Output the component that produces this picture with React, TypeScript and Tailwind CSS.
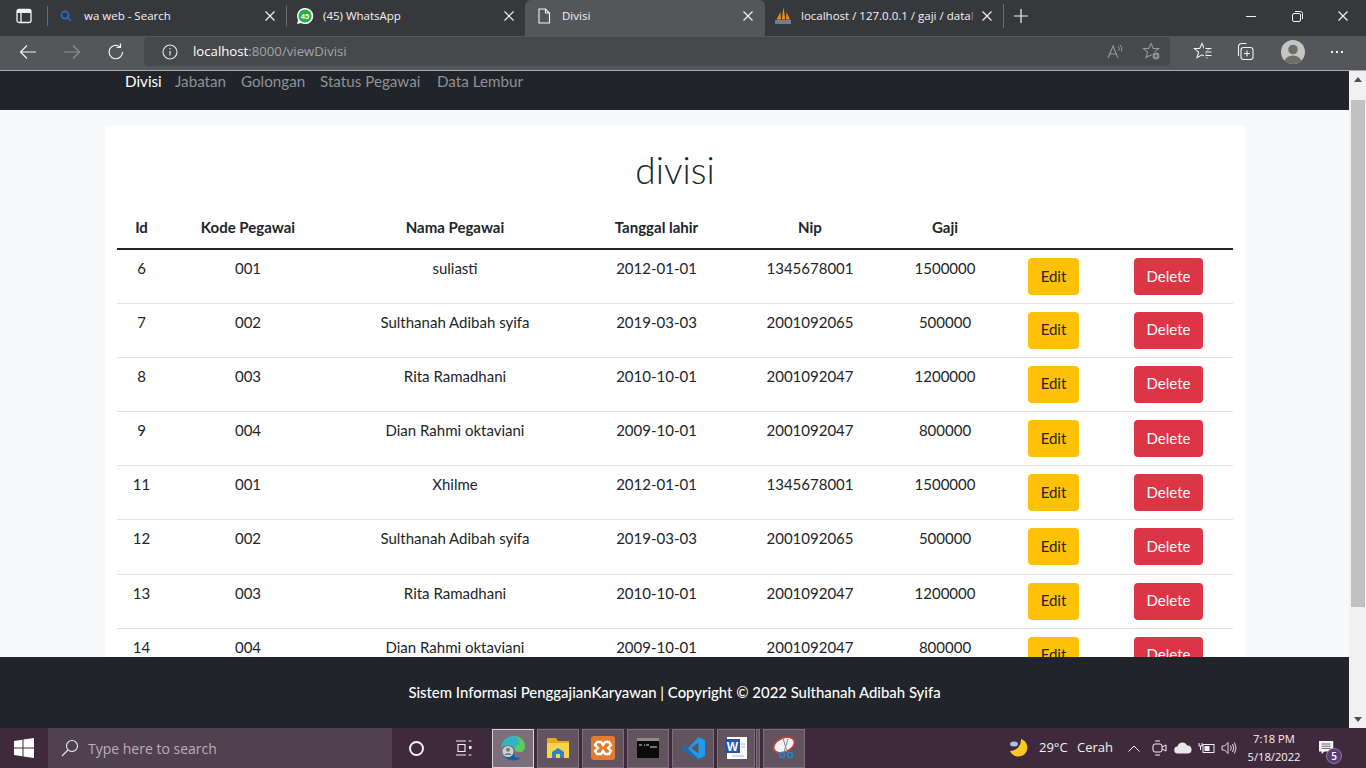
import React from "react";

const rows = [
  ["6", "001", "suliasti", "2012-01-01", "1345678001", "1500000"],
  ["7", "002", "Sulthanah Adibah syifa", "2019-03-03", "2001092065", "500000"],
  ["8", "003", "Rita Ramadhani", "2010-10-01", "2001092047", "1200000"],
  ["9", "004", "Dian Rahmi oktaviani", "2009-10-01", "2001092047", "800000"],
  ["11", "001", "Xhilme", "2012-01-01", "1345678001", "1500000"],
  ["12", "002", "Sulthanah Adibah syifa", "2019-03-03", "2001092065", "500000"],
  ["13", "003", "Rita Ramadhani", "2010-10-01", "2001092047", "1200000"],
  ["14", "004", "Dian Rahmi oktaviani", "2009-10-01", "2001092047", "800000"],
];

const X = () => (
  <svg width="12" height="12" viewBox="0 0 12 12" className="shrink-0"><path d="M1.500 1.500l9 9M10.500 1.500l-9 9" stroke="#f0f0f0" strokeWidth="1.200" /></svg>
);

const STAR = "M9 1.500l2.300 5h5.400l-4.300 3.700 1.600 5.500L9 12.800l-5 2.900 1.600-5.500L1.300 6.500h5.400z";

function Tab({ icon, title, active, w }: { icon: React.ReactNode; title: React.ReactNode; active?: boolean; w: string }) {
  return (
    <div className={`mb-[-4px] flex h-[36px] shrink-0 items-center pb-[4px] ${w} ${active ? "rounded-t-[6px] bg-[#55565a] pl-[6px] pr-[11px]" : "pl-[5px] pr-[10px]"}`}>
      <div className="flex w-[26px] shrink-0 justify-center">{icon}</div>
      <div className="ml-[5px] min-w-0 flex-1 overflow-hidden whitespace-nowrap text-[11.500px] text-[#f2f2f2]">{title}</div>
      <X />
    </div>
  );
}

function Tile({ children, active, w = "w-[42px]" }: { children?: React.ReactNode; active?: boolean; w?: string }) {
  return (
    <div className={`flex h-[39px] shrink-0 items-center justify-center border ${w} ${active ? "border-[#d8d4d8] bg-[#7c6f7a]" : "border-[#7d7079] bg-[#63535e]"}`}>
      {children}
    </div>
  );
}

export default function App() {
  return (
    <div className="flex h-[768px] w-[1366px] flex-col overflow-hidden bg-white" style={{ fontFamily: '"Open Sans","Liberation Sans",sans-serif' }}>
      {/* tab strip */}
      <div className="flex h-[36px] shrink-0 items-center bg-[#37383c] pb-[4px]">
        <div className="flex w-[47px] shrink-0 justify-center">
          <svg width="16" height="16" viewBox="0 0 16 16" fill="none"><rect x="1" y="1.500" width="14" height="13" rx="2" stroke="#f2f2f2" strokeWidth="1.300" /><path d="M5 5v9" stroke="#f2f2f2" strokeWidth="1.300" /><rect x="1" y="1.500" width="14" height="3.500" fill="#f2f2f2" /></svg>
        </div>
        <div className="h-[20px] w-px shrink-0 bg-[#6a6b6f]" />
        <Tab
          w="w-[238px]"
          title="wa web - Search"
          icon={<svg width="12" height="12" viewBox="0 0 12 12" fill="none"><circle cx="5" cy="5" r="3.600" stroke="#1a78d0" strokeWidth="1.600" /><path d="M7.600 7.600l3.400 3.400" stroke="#1a78d0" strokeWidth="1.600" /></svg>}
        />
        <div className="h-[20px] w-px shrink-0 bg-[#6a6b6f]" />
        <Tab
          w="w-[238px]"
          title="(45) WhatsApp"
          icon={
            <svg width="18" height="18" viewBox="0 0 18 18"><path d="M9 1a8 8 0 0 0-6.900 12L1 17l4.200-1.100A8 8 0 1 0 9 1z" fill="#fff" /><circle cx="9" cy="9" r="6.600" fill="#25b04a" /><text x="9" y="11.500" textAnchor="middle" fontSize="7.500" fontWeight="700" fill="#fff" fontFamily="Liberation Sans">45</text></svg>
          }
        />
        <Tab
          active
          w="w-[240px]"
          title="Divisi"
          icon={<svg width="14" height="16" viewBox="0 0 14 16" fill="none"><path d="M2 1h6.500L12.500 5v10H2z M8.500 1v4h4" stroke="#f2f2f2" strokeWidth="1.100" /></svg>}
        />
        <Tab
          w="w-[238px]"
          title={<>localhost / 127.0.0.1 / gaji / data<span className="opacity-40">l</span></>}
          icon={
            <svg width="18" height="18" viewBox="0 0 18 18"><path d="M2.500 12.500L6.500 5l.500 7.500zM7.800 12.500L9.500 0l1.700 12.500zM12 12.500L12.500 5l3.500 7.500z" fill="#ef8e1b" /><rect x="1" y="13" width="16" height="4" fill="#777c90" /></svg>
          }
        />
        <div className="h-[24px] w-px shrink-0 bg-[#6a6b6f]" />
        <div className="flex w-[34px] shrink-0 justify-center">
          <svg width="16" height="16" viewBox="0 0 16 16"><path d="M8 1v14M1 8h14" stroke="#f2f2f2" strokeWidth="1.200" /></svg>
        </div>
        <div className="flex-1" />
        <div className="flex w-[46px] justify-center"><div className="h-px w-[10px] bg-[#f2f2f2]" /></div>
        <div className="flex w-[46px] justify-center">
          <svg width="11" height="11" viewBox="0 0 11 11" fill="none"><rect x="0.500" y="2.500" width="8" height="8" rx="1.500" stroke="#f2f2f2" /><path d="M3 0.500h5.500A2 2 0 0 1 10.500 2.500V8" stroke="#f2f2f2" /></svg>
        </div>
        <div className="flex w-[46px] justify-center"><X /></div>
      </div>

      {/* toolbar */}
      <div className="flex h-[34px] shrink-0 items-center bg-[#55565a] pb-[3px]">
        <div className="flex w-[144px] shrink-0 items-center pl-[19px]">
          <svg width="18" height="16" viewBox="0 0 18 16" fill="none"><path d="M17 8H1.500M8 1.500L1.500 8 8 14.500" stroke="#f2f2f2" strokeWidth="1.200" /></svg>
          <svg className="ml-[26px]" width="18" height="16" viewBox="0 0 18 16" fill="none"><path d="M1 8h15.500M10 1.500L16.500 8 10 14.500" stroke="#8d8e91" strokeWidth="1.200" /></svg>
          <svg className="ml-[26px]" width="18" height="18" viewBox="0 0 18 18" fill="none"><path d="M15.500 9A6.700 6.700 0 1 1 13 3.800M13.500 0.500v4h-4" stroke="#f2f2f2" strokeWidth="1.200" /></svg>
        </div>
        <div className="flex h-[29px] w-[1026px] shrink-0 items-center rounded-[4px] bg-[#47484c] pl-[18px] pr-[9px]">
          <svg width="16" height="16" viewBox="0 0 16 16" fill="none"><circle cx="8" cy="8" r="7" stroke="#e8e8e8" strokeWidth="1.100" /><path d="M8 7v4.500" stroke="#e8e8e8" strokeWidth="1.200" /><circle cx="8" cy="4.800" r="0.800" fill="#e8e8e8" /></svg>
          <div className="ml-[15px] text-[13.200px] text-white">localhost<span className="text-[#a3a4a6]">:8000/viewDivisi</span></div>
          <div className="flex-1" />
          <svg width="17" height="16" viewBox="0 0 17 16" fill="none"><path d="M1 14L6 2l5 12M3 10h6" stroke="#96979a" strokeWidth="1.100" /><path d="M11 2.500q2 1.500 1 4M13 1q3 2.500 1.500 6.500" stroke="#96979a" /></svg>
          <svg className="ml-[18px]" width="19" height="19" viewBox="0 0 19 19" fill="none"><path d={STAR} stroke="#96979a" strokeWidth="1.100" /><circle cx="14" cy="14" r="4" fill="#96979a" stroke="#47484c" strokeWidth="1.200" /><path d="M14 12.300v3.400M12.300 14h3.400" stroke="#47484c" /></svg>
        </div>
        <div className="flex flex-1 items-center pl-[23px]">
          <svg width="19" height="19" viewBox="0 0 19 19" fill="none"><path d={STAR} stroke="#f2f2f2" strokeWidth="1.100" /><path d="M11 6h8M11 10h8M11 14h8" stroke="#55565a" strokeWidth="3" /><path d="M12.500 6.500h6M12.500 10h6M12.500 13.500h6" stroke="#f2f2f2" strokeWidth="1.100" /></svg>
          <svg className="ml-[23px]" width="19" height="19" viewBox="0 0 19 19" fill="none"><rect x="6" y="5.500" width="12" height="12" rx="2.500" stroke="#f2f2f2" strokeWidth="1.100" /><path d="M12 8.500v6M9 11.500h6" stroke="#f2f2f2" strokeWidth="1.100" /><path d="M3.500 14V5a3 3 0 0 1 3-3.500h5" stroke="#f2f2f2" strokeWidth="1.100" /></svg>
          <div className="ml-[27px] flex h-[24px] w-[24px] items-center justify-center overflow-hidden rounded-full bg-[#c7c5c1]">
            <svg width="24" height="24" viewBox="0 0 24 24"><circle cx="12" cy="9.500" r="4.800" fill="#6e6d6a" /><ellipse cx="12" cy="22" rx="8.500" ry="6.500" fill="#6e6d6a" /></svg>
          </div>
          <div className="ml-[26px] flex gap-[3px]">
            <div className="h-[2px] w-[2px] bg-[#f2f2f2]" /><div className="h-[2px] w-[2px] bg-[#f2f2f2]" /><div className="h-[2px] w-[2px] bg-[#f2f2f2]" />
          </div>
        </div>
      </div>
      <div className="h-px shrink-0 bg-[#a9a9ab]" />

      {/* page */}
      <div className="flex min-h-0 flex-1">
        <div className="flex min-w-0 flex-1 flex-col" style={{ fontFamily: 'Lato,"Open Sans",sans-serif' }}>
          <nav className="flex h-[39px] shrink-0 bg-[#212529] pl-[125px] text-[15.200px] leading-[20px] text-[#8e9195]">
            <div className="w-[50px] text-white">Divisi</div>
            <div className="w-[66px]">Jabatan</div>
            <div className="w-[79px]">Golongan</div>
            <div className="w-[117px]">Status Pegawai</div>
            <div>Data Lembur</div>
          </nav>
          <main className="min-h-0 flex-1 overflow-hidden bg-[#f8f9fa] pl-[105px] pr-[104px] pt-[16px]">
            <div className="bg-white px-[12px] pt-[23px] text-[#212529]">
              <h1 className="mb-[17px] text-center text-[37px] font-light leading-[41px]">divisi</h1>
              <table className="w-full table-fixed border-collapse text-center text-[15px] leading-[22px]">
                <thead>
                  <tr className="h-[42px] border-b-2 border-[#212529]">
                    <th className="w-[49px] pb-[2px] font-bold">Id</th>
                    <th className="w-[164px] pb-[2px] font-bold">Kode Pegawai</th>
                    <th className="w-[250px] pb-[2px] font-bold">Nama Pegawai</th>
                    <th className="w-[153px] pb-[2px] font-bold">Tanggal lahir</th>
                    <th className="w-[154px] pb-[2px] font-bold">Nip</th>
                    <th className="w-[116px] pb-[2px] font-bold">Gaji</th>
                    <th className="w-[101px]"></th>
                    <th></th>
                  </tr>
                </thead>
                <tbody>
                  {rows.map((r, i) => (
                    <tr key={i} className="h-[54.200px] border-b border-[#dee2e6]">
                      {r.map((c, j) => (
                        <td key={j} className="pb-[14px] pt-[7px] align-top">{c}</td>
                      ))}
                      <td className="pt-[8px] align-top">
                        <button className="h-[37px] w-[51px] rounded-[4px] bg-[#ffc107] pb-[2px] text-[#212529]">Edit</button>
                      </td>
                      <td className="pt-[8px] align-top">
                        <button className="h-[37px] w-[69px] rounded-[4px] bg-[#dc3545] pb-[2px] text-white">Delete</button>
                      </td>
                    </tr>
                  ))}
                </tbody>
              </table>
            </div>
          </main>
          <footer className="flex h-[71px] shrink-0 items-center justify-center bg-[#212529] pb-[1px] text-[14.900px] font-medium text-white">
            Sistem Informasi PenggajianKaryawan | Copyright © 2022 Sulthanah Adibah Syifa
          </footer>
        </div>
        {/* scrollbar */}
        <div className="flex w-[17px] shrink-0 flex-col items-center bg-[#f1f1f1]">
          <div className="flex h-[17px] items-center justify-center">
            <div className="h-0 w-0 border-x-[4px] border-b-[5px] border-x-transparent border-b-[#505050]" />
          </div>
          <div className="mt-[12px] h-[507px] w-[14px] bg-[#c1c1c1]" />
          <div className="flex-1" />
          <div className="flex h-[17px] items-center justify-center">
            <div className="h-0 w-0 border-x-[4px] border-t-[5px] border-x-transparent border-t-[#505050]" />
          </div>
        </div>
      </div>

      {/* taskbar */}
      <div className="flex h-[40px] shrink-0 items-center bg-[#3f2a3d]">
        <div className="flex w-[48px] shrink-0 justify-center">
          <svg width="20" height="20" viewBox="0 0 20 20" fill="#fff"><path d="M0 3l8.500-1.200V9.500H0zM9.500 1.600L20 0v9.500H9.500zM0 10.500h8.500v7.700L0 17zM9.500 10.500H20V20L9.500 18.400z" /></svg>
        </div>
        <div className="flex h-[40px] w-[344px] shrink-0 items-center bg-[#514050] pl-[13px] text-[14px] text-[#b8afb7]">
          <svg width="18" height="18" viewBox="0 0 18 18" fill="none"><circle cx="11" cy="7" r="5.500" stroke="#eee" strokeWidth="1.100" /><path d="M7 11l-6 6" stroke="#eee" strokeWidth="1.100" /></svg>
          <span className="ml-[9px]">Type here to search</span>
        </div>
        <div className="flex w-[48px] shrink-0 justify-center">
          <div className="h-[15px] w-[15px] rounded-full border-2 border-[#f2f2f2]" />
        </div>
        <div className="flex w-[48px] shrink-0 justify-center">
          <svg width="18" height="16" viewBox="0 0 18 16" fill="none" stroke="#f2f2f2" strokeWidth="1.100"><path d="M1 1h10M1 15h10M3 4.500h7v7H3zM13.500 1h3M13.500 15h3" /><rect x="14" y="6" width="2.500" height="3" fill="#f2f2f2" stroke="none" /></svg>
        </div>
        <div className="ml-[4px] flex w-[312px] shrink-0 gap-[3px]">
          <Tile active>
            <svg width="28" height="28" viewBox="0 0 28 28"><path d="M2 15C2 7 8 2 14.500 2 21 2 26 6.500 26 12c0 4-3 6-6.500 6-2.500 0-4-1-4-2.500 0-5-13-6-13.500-.5z" fill="#32b4c8" /><path d="M26 12c0-5.500-5-10-11.500-10 4 1 6.500 4.500 6 8-2 .5-4 1.500-5 3.500 .5 3 3 4.500 6 4.500 2.500 0 4.500-2.500 4.500-6z" fill="#5ecb5a" /><path d="M3 17c1 6 6 9.500 11.500 9.500 3 0 6-1 8-3-4 1-8-.5-8-5-5 3-9 2-11.500-1.500z" fill="#1160b0" /><circle cx="9" cy="17.500" r="5.500" fill="#cfcfcf" /><circle cx="9" cy="15.800" r="2" fill="#777" /><path d="M5.500 21c.5-2.500 6.500-2.500 7 0z" fill="#777" /></svg>
          </Tile>
          <Tile>
            <svg width="24" height="22" viewBox="0 0 24 22"><path d="M1 1h9l2 3h11v16H1z" fill="#e8a91c" /><path d="M1 6h22v15H1z" fill="#fcd24f" /><path d="M6 21v-6l6-4 6 4v6h-4v-4h-4v4z" fill="#2a83d0" /></svg>
          </Tile>
          <Tile>
            <svg width="24" height="24" viewBox="0 0 24 24"><rect width="24" height="24" rx="3" fill="#e47b2c" /><path d="M6 6h4l2 3 2-3h4l2 3-3 3 3 3-2 3h-4l-2-3-2 3H6l-2-3 3-3-3-3z" fill="none" stroke="#fff" strokeWidth="2.400" /></svg>
          </Tile>
          <Tile>
            <svg width="22" height="20" viewBox="0 0 22 20"><rect width="22" height="20" fill="#0b0b0b" /><rect width="22" height="3" fill="#8b8b8b" /><path d="M2 7h3M7 7h1M9 7h3M13 9h7" stroke="#ddd" /></svg>
          </Tile>
          <Tile>
            <svg width="24" height="24" viewBox="0 0 24 24"><path d="M17.500 1L24 4v16l-6.500 3L7 12.500z" fill="#1f9cf0" /><path d="M17.500 6.500v11L10 12z" fill="#63535e" /><path d="M17.500 1L3 14l-3-2 3.500-3 3 2.500zM0 12l3-2 14.500 13-4-1z" fill="#0f72bd" /></svg>
          </Tile>
          <div className="flex gap-px">
            <Tile w="w-[38px]">
              <svg width="24" height="24" viewBox="0 0 24 24"><rect x="3" y="1" width="20" height="22" fill="#fff" /><rect x="1" y="3" width="15" height="14" fill="#1f55ae" /><text x="8.500" y="14.500" textAnchor="middle" fontSize="12" fontWeight="700" fill="#fff" fontFamily="Liberation Sans">W</text><path d="M17 8h4M17 11h4M8 20h12" stroke="#9db3d8" /></svg>
            </Tile>
            <Tile w="w-[4px]" />
          </div>
          <Tile>
            <svg width="26" height="26" viewBox="0 0 26 26" fill="none"><ellipse cx="13" cy="10" rx="11" ry="7" transform="rotate(-25 13 10)" fill="#f4f4f4" stroke="#c9403f" strokeWidth="1.600" /><path d="M12 3l4 14M17 4l-4 13" stroke="#888" /><circle cx="11" cy="20" r="2.500" stroke="#1d88d0" strokeWidth="1.500" /><circle cx="19" cy="20" r="2.500" stroke="#1d88d0" strokeWidth="1.500" /></svg>
          </Tile>
        </div>
        <div className="w-[205px] shrink-0" />
        <div className="flex w-[20px] shrink-0 justify-center">
          <svg width="20" height="20" viewBox="0 0 20 20"><path d="M12 1A9 9 0 1 1 1 13A11 11 0 0 0 12 1z" fill="#f8c91e" /><ellipse cx="5" cy="6" rx="4" ry="2.500" fill="#a9c4dc" /></svg>
        </div>
        <div className="ml-[10px] w-[38px] shrink-0 text-[13px] text-[#f2f2f2]">29°C</div>
        <div className="w-[51px] shrink-0 text-[13px] text-[#f2f2f2]">Cerah</div>
        <svg className="shrink-0" width="12" height="7" viewBox="0 0 12 7" fill="none"><path d="M0.500 6.500L6 1l5.500 5.500" stroke="#f2f2f2" /></svg>
        <svg className="ml-[12px] shrink-0" width="16" height="16" viewBox="0 0 16 16" fill="none" stroke="#f2f2f2"><rect x="1" y="4" width="9" height="8" rx="2" /><path d="M10 7l4-2v6l-4-2M3 1h5M3 15h5" /></svg>
        <svg className="ml-[6px] shrink-0" width="18" height="12" viewBox="0 0 18 12"><path d="M4 11.500a3.500 3.500 0 0 1-.5-7A5 5 0 0 1 13 3.500a3.900 3.900 0 0 1 1 8z" fill="#e8e8e8" /></svg>
        <svg className="ml-[6px] shrink-0" width="17" height="12" viewBox="0 0 17 12" fill="none" stroke="#f2f2f2"><rect x="5" y="2.500" width="11" height="8" /><rect x="6.500" y="4" width="5" height="5" fill="#f2f2f2" stroke="none" /><path d="M1 1v3h3V1M2.500 4v4" /></svg>
        <svg className="ml-[6px] shrink-0" width="16" height="14" viewBox="0 0 16 14" fill="none" stroke="#f2f2f2" strokeWidth="0.900"><path d="M1 5h2.500L7 1.500v11L3.500 9H1zM9.500 4.500q1.500 2.500 0 5M11.500 3q2.500 4 0 8M13.500 1.500q3 5.500 0 11" /></svg>
        <div className="ml-[1px] w-[72px] shrink-0 text-center text-[11.200px] leading-[18px] text-[#f2f2f2]">
          <div>7:18 PM</div>
          <div>5/18/2022</div>
        </div>
        <div className="relative ml-[8px] h-[24px] w-[24px] shrink-0">
          <svg className="mt-[4px]" width="18" height="16" viewBox="0 0 20 18"><path d="M1 1h16v12H7l-3 3v-3H1z" fill="#f5f5f5" /><path d="M4 4.500h10M4 7h10M4 9.500h10" stroke="#555" /></svg>
          <div className="absolute left-[8px] top-[12px] flex h-[16px] w-[16px] items-center justify-center rounded-full border border-[#8f7da0] bg-[#5c3a78] text-[10px] font-semibold text-white">5</div>
        </div>
      </div>
    </div>
  );
}
